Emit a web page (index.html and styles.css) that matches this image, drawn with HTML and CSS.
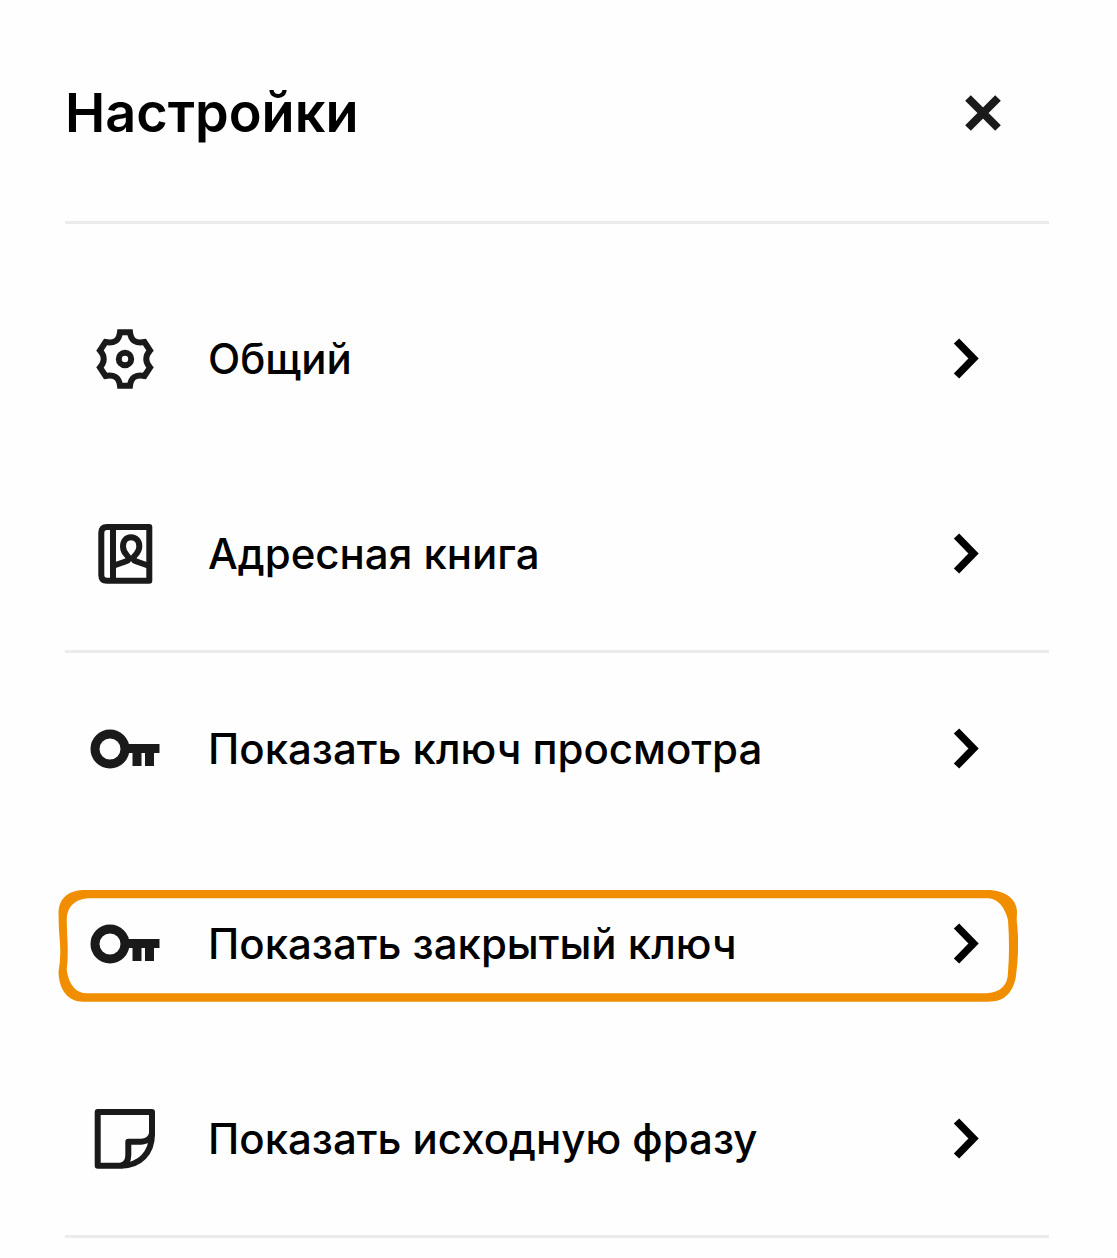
FILE: index.html
```html
<!DOCTYPE html>
<html lang="ru">
<head>
    <meta charset="UTF-8">
    <meta name="viewport" content="width=device-width, initial-scale=1.0">
    <title>Настройки</title>
    <link rel="stylesheet" href="styles.css">
</head>
<body>
    <svg class="sprite" aria-hidden="true">
        <symbol id="key" viewBox="0 0 70 70">
            <circle cx="20" cy="35" r="15" fill="none" stroke="currentColor" stroke-width="9"/>
            <path d="M36 30H69.500V39H64V52H55V39H51.500V52H42.500V39H36Z" fill="currentColor"/>
        </symbol>
        <symbol id="chevron" viewBox="0 0 26 42">
            <path d="M3.500 3L20.500 20.500L3.500 38" fill="none" stroke="currentColor" stroke-width="7.500"/>
        </symbol>
    </svg>

    <main class="settings">
        <header class="header">
            <h1>Настройки</h1>
            <button class="close" type="button" aria-label="Закрыть">
                <svg viewBox="0 0 36 36"><path d="M3 3L33 33M33 3L3 33"/></svg>
            </button>
        </header>

        <ul class="menu">
            <li class="item">
                <button type="button">
                    <svg class="icon gear" viewBox="0 0 70 70">
                        <path d="M30 8.300H40C41 17 46 19.500 54.500 18L60 26.500C55 32 55 38 60 43.500L54.500 52C46 50.500 41 53 40 61.700H30C29 53 24 50.500 15.500 52L10 43.500C15 38 15 32 10 26.500L15.500 18C24 19.500 29 17 30 8.300Z"/>
                        <circle cx="35" cy="35" r="6.200"/>
                    </svg>
                    <span>Общий</span>
                    <svg class="chevron"><use href="#chevron"/></svg>
                </button>
            </li>
            <li class="item divider">
                <button type="button">
                    <svg class="icon" viewBox="0 0 70 70">
                        <path d="M17 8H59.300V61.700H17Q11.300 61.700 11.300 56V14Q11.300 8 17 8ZM23 8V61.700"/>
                        <path d="M24 46.500L35.500 42.500Q41 40.500 37.500 37C34.500 34 33 31 33 27.500C33 22 36 18.300 41 18.300S49.300 22 49.300 27.500C49.300 31 47.500 34 44.500 37Q41 40.500 46.500 42.500L58 46.500"/>
                    </svg>
                    <span>Адресная книга</span>
                    <svg class="chevron"><use href="#chevron"/></svg>
                </button>
            </li>
            <li class="item">
                <button type="button">
                    <svg class="icon"><use href="#key"/></svg>
                    <span>Показать ключ просмотра</span>
                    <svg class="chevron"><use href="#chevron"/></svg>
                </button>
            </li>
            <li class="item">
                <button type="button">
                    <svg class="icon"><use href="#key"/></svg>
                    <span>Показать закрытый ключ</span>
                    <svg class="chevron"><use href="#chevron"/></svg>
                </button>
                <!-- hand-drawn frame -->
                <svg class="frame" viewBox="0 0 960 115" preserveAspectRatio="none" aria-hidden="true">
                    <path fill-rule="evenodd" d="M28 2H929C948 2 959 12 959 24L958.700 32Q962 60 957.700 90C954 106 946 113.700 930 113.700H25C10 113.700 1 102 0.500 84Q3 70 2 56Q0.500 40 0.500 25C1 10 10 2 28 2ZM30 10.300C16 11 9 20 8.700 31Q9 45 9.700 59Q10 72 8.700 82C11 97 18 105.300 29 105.300H929C943 104 950 97 950 84Q952 60 950 32C947 20 940 10.300 930 10.300Z"/>
                </svg>
            </li>
            <li class="item divider">
                <button type="button">
                    <svg class="icon" viewBox="0 0 70 70">
                        <path d="M7.700 8H62V30C62 49 50 61.700 31 61.700H7.700Z"/>
                        <path d="M31 61.700Q38.300 60 38.300 51V37.700H51Q61 37 62 29"/>
                    </svg>
                    <span>Показать исходную фразу</span>
                    <svg class="chevron"><use href="#chevron"/></svg>
                </button>
            </li>
        </ul>
    </main>
</body>
</html>
```

FILE: styles.css
```css
* {
    box-sizing: border-box;
}
body {
    margin: 0;
    background-color: #fefefe;
    color: #000;
    font-family: Inter, "Liberation Sans", sans-serif;
}
.sprite {
    position: absolute;
    width: 0;
    height: 0;
}
.settings {
    padding: 0 68px 0 65px;
}
.header {
    display: flex;
    align-items: center;
    justify-content: space-between;
    padding: 81px 48px 76px 0;
    border-bottom: 3px solid #ebebed;
}
h1 {
    margin: 0;
    font-size: 54px;
    line-height: 64px;
    font-weight: 600;
}
button {
    padding: 0;
    border: none;
    background: none;
    color: inherit;
    font: inherit;
    cursor: pointer;
}
.close svg {
    display: block;
    width: 36px;
    height: 36px;
    stroke: #1a1a1a;
    stroke-width: 8;
}
.menu {
    margin: 0;
    padding: 39px 0 0;
    list-style: none;
}
.item {
    position: relative;
    border-bottom: 3px solid transparent;
}
.divider {
    border-bottom-color: #ebebed;
}
.item button {
    display: flex;
    align-items: center;
    width: 100%;
    min-height: 192px;
    padding: 0 70px 0 25px;
    font-size: 42px;
    line-height: 52px;
    font-weight: 500;
    text-align: left;
}
.item span {
    flex: 1;
    margin-left: 48px;
}
.icon {
    width: 70px;
    height: 70px;
    color: #1a1a1a;
    fill: none;
    stroke: #1a1a1a;
    stroke-width: 6;
    stroke-linejoin: round;
}
.icon use {
    stroke: none;
}
.gear {
    stroke-linejoin: miter;
}
.chevron {
    width: 26px;
    height: 42px;
}
.frame {
    position: absolute;
    top: 40px;
    left: -7px;
    width: calc(100% - 24px);
    height: 115px;
    fill: #f18e00;
    pointer-events: none;
}
```
